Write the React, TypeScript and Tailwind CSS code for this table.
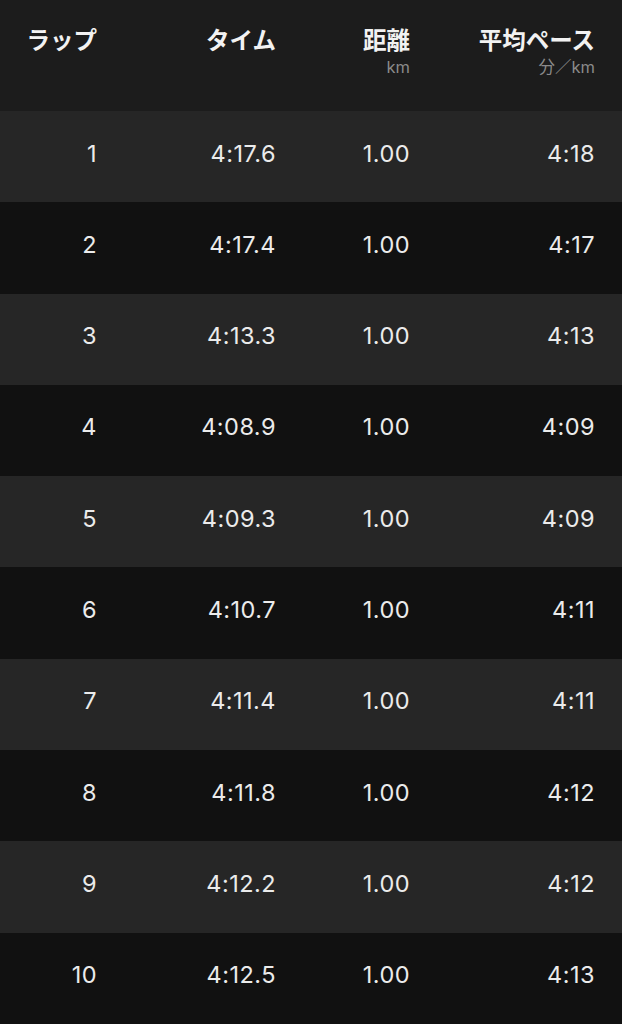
import React from "react";

type Lap = { lap: number; time: string; dist: string; pace: string };

const laps: Lap[] = [
  { lap: 1, time: "4:17.6", dist: "1.00", pace: "4:18" },
  { lap: 2, time: "4:17.4", dist: "1.00", pace: "4:17" },
  { lap: 3, time: "4:13.3", dist: "1.00", pace: "4:13" },
  { lap: 4, time: "4:08.9", dist: "1.00", pace: "4:09" },
  { lap: 5, time: "4:09.3", dist: "1.00", pace: "4:09" },
  { lap: 6, time: "4:10.7", dist: "1.00", pace: "4:11" },
  { lap: 7, time: "4:11.4", dist: "1.00", pace: "4:11" },
  { lap: 8, time: "4:11.8", dist: "1.00", pace: "4:12" },
  { lap: 9, time: "4:12.2", dist: "1.00", pace: "4:12" },
  { lap: 10, time: "4:12.5", dist: "1.00", pace: "4:13" },
];

const grid = "grid grid-cols-[97px_179px_134px_185px] pr-[27px] text-right";

export default function App() {
  return (
    <div className="w-[622px] h-[1024px] overflow-hidden bg-[#111111] font-['Inter','Noto_Sans_CJK_JP',sans-serif]">
      {/* Header */}
      <div className={`${grid} h-[111px] bg-[#1c1c1c] pt-[25px]`}>
        <div className="text-[23.5px] leading-[32px] font-bold text-[#f2f2f2]">ラップ</div>
        <div className="text-[23.5px] leading-[32px] font-bold text-[#f2f2f2]">タイム</div>
        <div className="flex flex-col items-end">
          <span className="text-[23.5px] leading-[32px] font-bold text-[#f2f2f2]">距離</span>
          <span className="text-[16.5px] leading-[20px] text-[#8a8a8a]">km</span>
        </div>
        <div className="flex flex-col items-end">
          <span className="text-[23.5px] leading-[32px] font-bold text-[#f2f2f2]">平均ペース</span>
          <span className="text-[16.5px] leading-[20px] text-[#8a8a8a]">分／km</span>
        </div>
      </div>

      {/* Rows */}
      {laps.map((l, i) => (
        <div
          key={l.lap}
          className={`${grid} h-[91.3px] items-center pb-[7px] text-[23.5px] tracking-[0.02em] text-[#ebebeb] font-normal ${
            i % 2 === 0 ? "bg-[#262626]" : "bg-[#111111]"
          }`}
        >
          <span>{l.lap}</span>
          <span>{l.time}</span>
          <span>{l.dist}</span>
          <span>{l.pace}</span>
        </div>
      ))}
    </div>
  );
}
